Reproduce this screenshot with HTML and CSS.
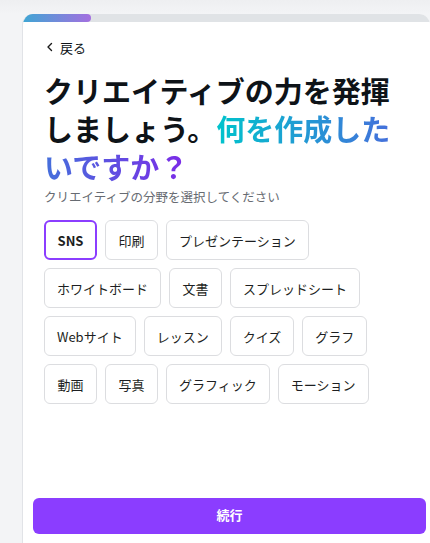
FILE: index.html
```html
<!DOCTYPE html>
<html lang="ja">
<head>
<meta charset="utf-8">
<link rel="stylesheet" href="styles.css">
</head>
<body>
<div class="page">
  <div class="card">
    <div class="progress"><div class="progress-fill"></div></div>
    <div class="content">
      <a class="back" href="#"><svg class="chev" width="8" height="10" viewBox="0 0 8 10"><path d="M5.5 1.5 L2 5 L5.5 8.5" fill="none" stroke="#1a1a1a" stroke-width="1.4" stroke-linecap="round" stroke-linejoin="round"/></svg><span>戻る</span></a>
      <h1 class="title">クリエイティブの力を発揮しましょう。<span class="grad">何を作成したいですか？</span></h1>
      <p class="sub">クリエイティブの分野を選択してください</p>
      <div class="chips">
        <button class="chip selected">SNS</button>
        <button class="chip">印刷</button>
        <button class="chip">プレゼンテーション</button>
        <button class="chip">ホワイトボード</button>
        <button class="chip">文書</button>
        <button class="chip">スプレッドシート</button>
        <button class="chip">Webサイト</button>
        <button class="chip">レッスン</button>
        <button class="chip">クイズ</button>
        <button class="chip">グラフ</button>
        <button class="chip">動画</button>
        <button class="chip">写真</button>
        <button class="chip">グラフィック</button>
        <button class="chip">モーション</button>
      </div>
    </div>
    <div class="footer">
      <button class="continue">続行</button>
    </div>
  </div>
</div>
</body>
</html>
```

FILE: styles.css
```css
* { box-sizing: border-box; }
html, body { margin: 0; padding: 0; }
body {
  background: #f3f4f6;
  font-family: "Noto Sans CJK JP", "Noto Sans", sans-serif;
  color: #0e1318;
  width: 430px;
  height: 543px;
  overflow: hidden;
}
.page {
  padding: 14px 0 0 22px;
  height: 543px;
  background: linear-gradient(#eeeff1, #f3f4f6 14px);
}
.card {
  background: #fff;
  border-left: 1px solid #e1e3e7;
  border-radius: 11px 11px 0 0;
  height: 529px;
  width: 408px;
  overflow: hidden;
  display: flex;
  flex-direction: column;
}
.progress {
  height: 8px;
  background: #e0e3e6;
  flex: none;
}
.progress-fill {
  width: 68px;
  height: 8px;
  background: linear-gradient(90deg, #3fa6d4, #a46fe0);
  border-radius: 0 4px 4px 0;
}
.content {
  padding: 0 0 0 21px;
  flex: 1;
}
.back {
  display: inline-flex;
  align-items: center;
  gap: 6px;
  margin-top: 16px;
  height: 18px;
  text-decoration: none;
  color: #0e1318;
  font-size: 13px;
  margin-left: 2px;
}
.title {
  margin: 14px 0 0;
  font-size: 29px;
  line-height: 38px;
  font-weight: 700;
  letter-spacing: 0;
  width: 360px;
}
.grad {
  background: linear-gradient(90deg, #00c4cc, #7d2ae8);
  -webkit-background-clip: text;
  background-clip: text;
  color: transparent;
}
.sub {
  margin: 4px 0 0;
  font-size: 12.5px;
  line-height: 16px;
  color: #676b72;
}
.chips {
  display: flex;
  flex-wrap: wrap;
  gap: 8px;
  margin-top: 15px;
  width: 340px;
}
.chip {
  height: 40px;
  min-width: 53px;
  padding: 0 12px;
  border: 1px solid #dcdde0;
  border-radius: 6px;
  background: #fff;
  font-family: inherit;
  font-size: 13px;
  color: #1d1f22;
}
.chip.selected {
  border: 2px solid #8b3dff;
  font-weight: 700;
  padding: 0 11px;
}
.footer {
  padding: 0 0 9px 10px;
  flex: none;
}
.continue {
  width: 393px;
  height: 36px;
  border: none;
  border-radius: 6px;
  background: #8b3dff;
  color: #fff;
  font-family: inherit;
  font-weight: 700;
  font-size: 13px;
  padding: 0 0 3px;
}
```
